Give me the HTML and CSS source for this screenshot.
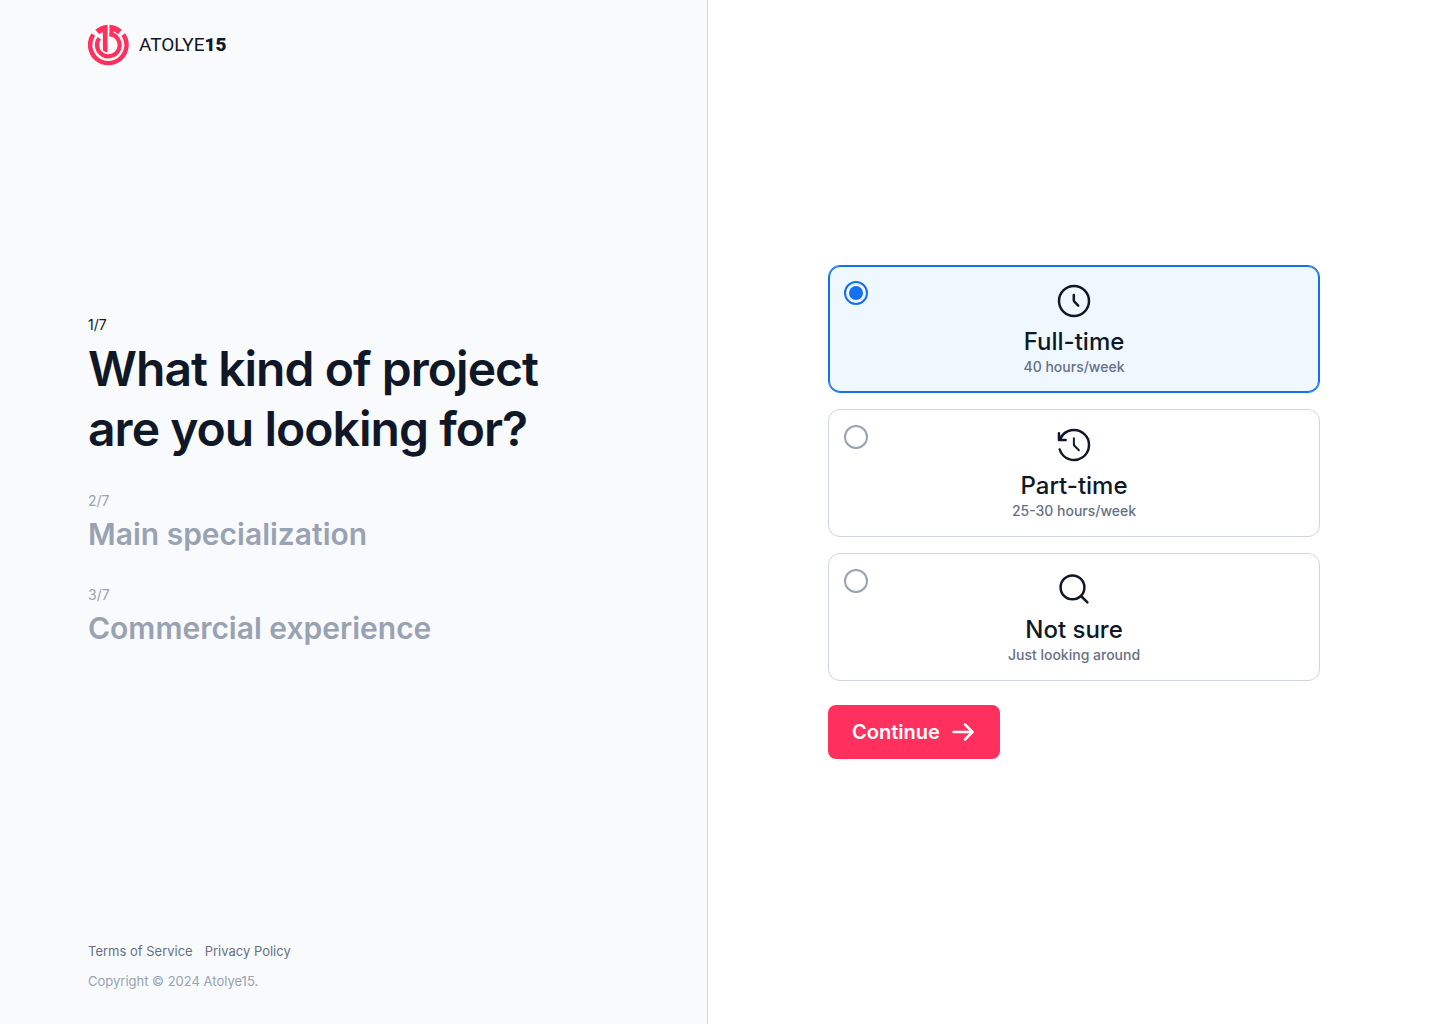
FILE: index.html
```html
<!DOCTYPE html>
<html lang="en">
<head>
<meta charset="utf-8">
<meta name="viewport" content="width=device-width, initial-scale=1">
<title>Atolye15</title>
<link rel="stylesheet" href="styles.css">
</head>
<body>
<div class="page">
  <aside class="intro">
    <header class="brand">
      <svg class="brand-mark" viewBox="0 0 42 42" aria-hidden="true">
        <g fill="none" stroke="currentColor" stroke-width="4.400">
          <path d="M5.300 10.600A18.200 18.200 0 1 0 35.300 10.600"/>
          <path stroke-width="4.200" d="M11.300 14.200A11.300 11.300 0 1 0 21.600 9.800"/>
        </g>
        <path fill="currentColor" d="M7.400 5.800Q12.600 1.200 19.500 .8v27.600q-3-.3-4.600-2.200V8.300l-4 1.800z"/>
        <path fill="currentColor" d="M21.500 .8q7 .4 12.200 5l-3.600 4.400q-2.200-2-4.600-3v5.300h-4z"/>
      </svg>
      <span class="brand-name">ATOLYE<b>15</b></span>
    </header>
    <main class="steps">
      <section class="step step-current">
        <p class="step-count">1/7</p>
        <h1 class="step-title">What kind of project are you looking for?</h1>
      </section>
      <section class="step">
        <p class="step-count">2/7</p>
        <h2 class="step-title">Main specialization</h2>
      </section>
      <section class="step">
        <p class="step-count">3/7</p>
        <h2 class="step-title">Commercial experience</h2>
      </section>
    </main>
    <footer class="footer">
      <nav class="footer-links">
        <a href="#terms">Terms of Service</a>
        <a href="#privacy">Privacy Policy</a>
      </nav>
      <p class="copyright">Copyright © 2024 Atolye15.</p>
    </footer>
  </aside>
  <form class="answers">
    <label class="option">
      <input type="radio" name="project" value="full-time" checked>
      <svg class="option-icon" viewBox="0 0 40 40" aria-hidden="true"><circle cx="20" cy="20" r="15"/><path d="M19.8 14v4.9c0 .8.3 1.5.8 2l3.6 3.7"/></svg>
      <span class="option-title">Full-time</span>
      <span class="option-note">40 hours/week</span>
    </label>
    <label class="option">
      <input type="radio" name="project" value="part-time">
      <svg class="option-icon" viewBox="0 0 40 40" aria-hidden="true"><path d="M5.700 24.500A15 15 0 1 0 6.400 13.700M5 8.300v6.600h6.700"/><path stroke-width="2" d="M19.900 13.300v6.900l5 5"/></svg>
      <span class="option-title">Part-time</span>
      <span class="option-note">25-30 hours/week</span>
    </label>
    <label class="option">
      <input type="radio" name="project" value="not-sure">
      <svg class="option-icon" viewBox="0 0 40 40" aria-hidden="true"><circle cx="18.500" cy="18.400" r="11.900"/><path d="M27 27l6.400 6.400"/></svg>
      <span class="option-title">Not sure</span>
      <span class="option-note">Just looking around</span>
    </label>
    <button class="continue" type="submit">
      Continue
      <svg class="continue-icon" viewBox="0 0 24 24" aria-hidden="true"><path d="M1.500 12h19M13 4.500l7.500 7.500-7.500 7.500"/></svg>
    </button>
  </form>
</div>
</body>
</html>
```
FILE: styles.css
```css
*, *::before, *::after { box-sizing: border-box; }

body {
  margin: 0;
  background: #fff;
  color: #101828;
  font-family: Inter, "Liberation Sans", sans-serif;
  font-size: 14px;
  line-height: 20px;
}

h1, h2, p { margin: 0; }

.page {
  display: grid;
  grid-template-columns: 59fr 61fr;
  min-height: 100vh;
}

.intro {
  display: flex;
  flex-direction: column;
  padding: 24px 88px 33px;
  background: #f9fafc;
  border-right: 1px solid #d0d5dd;
}

.brand {
  display: flex;
  align-items: center;
  gap: 9px;
}

.brand-mark {
  width: 42px;
  height: 42px;
  color: #ff305d;
}

.brand-name {
  font-family: Roboto, sans-serif;
  font-size: 19px;
  font-weight: 400;
  line-height: 24px;
}

.brand-name b { font-weight: 900; }

.steps {
  flex: 1;
  display: flex;
  flex-direction: column;
  justify-content: center;
  gap: 32px;
  padding-top: 24px;
}

.step {
  display: flex;
  flex-direction: column;
  gap: 4px;
  color: #98a2b3;
}

.step-title {
  font-size: 30px;
  font-weight: 600;
  line-height: 38px;
}

.step-current { color: #101828; }

.step-current .step-title {
  max-width: 500px;
  font-size: 48px;
  line-height: 60px;
  letter-spacing: -0.02em;
}

.footer {
  display: flex;
  flex-direction: column;
  gap: 10px;
  padding-top: 69px;
  font-size: 13px;
}

.footer-links {
  display: flex;
  gap: 12px;
}

.footer-links a {
  color: #667085;
  text-decoration: none;
}

.copyright { color: #98a2b3; }

.answers {
  display: flex;
  flex-direction: column;
  justify-content: center;
  gap: 16px;
  padding: 24px 120px;
}

.option {
  position: relative;
  display: flex;
  flex-direction: column;
  align-items: center;
  padding: 15px;
  border: 1px solid #d0d5dd;
  border-radius: 12px;
  cursor: pointer;
}

.option:has(input:checked) {
  background: #eff8ff;
  border-color: #1570ef;
  box-shadow: inset 0 0 0 1px #1570ef;
}

.option input {
  appearance: none;
  position: absolute;
  top: 15px;
  left: 15px;
  width: 24px;
  height: 24px;
  margin: 0;
  border: 2px solid #98a2b3;
  border-radius: 50%;
  background: #fff;
}

.option input:checked {
  padding: 3px;
  border-color: #1570ef;
  background: #1570ef content-box;
}

.option-icon {
  width: 40px;
  height: 40px;
  margin-bottom: 6px;
  fill: none;
  stroke: currentColor;
  stroke-width: 2.5;
  stroke-linecap: round;
  stroke-linejoin: round;
}

.option-title {
  font-size: 24px;
  font-weight: 500;
  line-height: 30px;
}

.option-note {
  color: #667085;
  font-weight: 500;
}

.continue {
  display: flex;
  align-items: center;
  align-self: flex-start;
  gap: 12px;
  margin-top: 8px;
  padding: 12px 24px;
  border: 0;
  border-radius: 8px;
  background: #ff305d;
  color: #fff;
  font: 600 20px/30px Inter, "Liberation Sans", sans-serif;
  cursor: pointer;
}

.continue-icon {
  width: 24px;
  height: 24px;
  fill: none;
  stroke: currentColor;
  stroke-width: 2.5;
  stroke-linecap: round;
  stroke-linejoin: round;
}
```
